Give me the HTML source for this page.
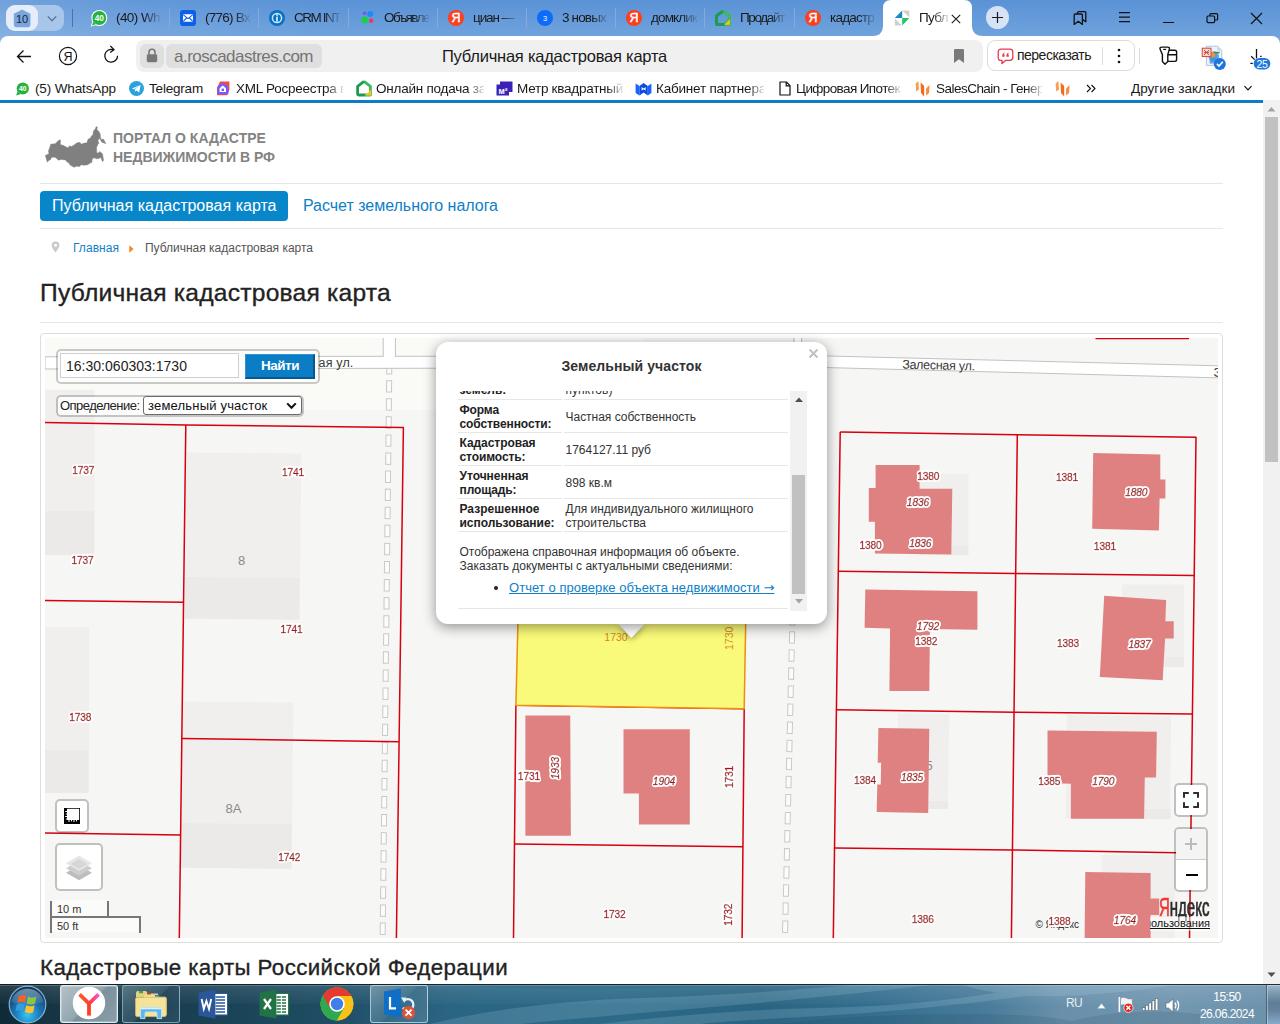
<!DOCTYPE html>
<html lang="ru">
<head>
<meta charset="utf-8">
<title>Публичная кадастровая карта</title>
<style>
*{box-sizing:border-box;margin:0;padding:0}
html,body{width:1280px;height:1024px;overflow:hidden;background:#fff}
body{position:relative;font-family:"Liberation Sans",Arial,sans-serif;color:#222;font-size:13px}
.abs{position:absolute}
.ui{font-family:"DejaVu Sans","Liberation Sans",sans-serif}
/* ---------- browser chrome ---------- */
#tabbar{position:absolute;left:0;top:0;width:1280px;height:48px;background:linear-gradient(90deg,rgba(255,255,255,.14) 0,rgba(255,255,255,.05) 140px,rgba(255,255,255,0) 320px),linear-gradient(180deg,#5a92d6 0,#70a3dd 36px,#7eabe0 48px)}
#toolbar{position:absolute;left:0;top:36px;width:1280px;height:40px;background:#fff;border-radius:8px 8px 0 0}
#bookbar{position:absolute;left:0;top:76px;width:1280px;height:24px;background:#fff}
#blueline{position:absolute;left:0;top:100px;width:1263px;height:3px;background:#0a7dc5}
.tab{position:absolute;top:0;height:36px;font-size:13.5px;color:#1a1a1a;white-space:nowrap;overflow:hidden}
.tab span{position:absolute;top:10px;left:0}
.tsep{position:absolute;top:8px;width:1px;height:20px;background:#86a9d8}
.bm{position:absolute;top:80.7px;height:17px;font-size:13.5px;color:#1a1a1a;white-space:nowrap;overflow:hidden}
.fade{-webkit-mask-image:linear-gradient(90deg,#000 0,#000 calc(100% - 16px),rgba(0,0,0,.12) 100%);mask-image:linear-gradient(90deg,#000 0,#000 calc(100% - 16px),rgba(0,0,0,.12) 100%)}
/* ---------- page ---------- */
#page{position:absolute;left:0;top:103px;width:1263px;height:881px;background:#fff;overflow:hidden}
.hr{position:absolute;left:40px;width:1183px;height:1px;background:#e6e6e6}
a{color:#0f7fc4}
/* ---------- map ---------- */
#mapwrap{position:absolute;left:40px;top:333px;width:1183px;height:610px;border:1px solid #ddd;border-radius:4px;background:#fff}
#map{position:absolute;left:45px;top:338px;width:1173px;height:600px;overflow:hidden;background:#f6f6f4}
.ml{font-family:"Liberation Sans",sans-serif;font-size:10.2px;fill:#a80e15;stroke:#a80e15;stroke-width:.45px;text-anchor:middle;letter-spacing:-.15px}
.mi{font-style:italic}
.ctl{position:absolute;background:#fff;background-clip:padding-box;border:2px solid rgba(0,0,0,.22);border-radius:5px}
/* ---------- popup ---------- */
#popup{position:absolute;left:436px;top:342px;width:391px;height:282px;background:#fff;border-radius:12px;box-shadow:0 3px 13px rgba(0,0,0,.42)}
#popup .row{position:absolute;left:22px;width:333px;font-size:12px;line-height:14px;color:#333}
#popup .lab{position:absolute;left:1px;font-weight:bold;color:#222}
#popup .val{position:absolute;left:107px;color:#333}
#popup .sep{position:absolute;left:22px;width:333px;height:1px;background:#e4e4e4}
/* ---------- taskbar ---------- */
#taskbar{position:absolute;left:0;top:984px;width:1280px;height:40px;background:linear-gradient(90deg,#27566b 0%,#1f4c63 30%,#2a6079 55%,#35708a 75%,#2a5f78 100%)}
</style>
</head>
<body>
<!-- ================= BROWSER CHROME ================= -->
<div id="tabbar">
  <!-- tab group pill -->
  <div class="abs" style="left:6px;top:5px;width:58px;height:26px;border-radius:9px;background:#a8c5ea"></div>
  <div class="abs" style="left:6px;top:5px;width:32px;height:26px;border-radius:9px;background:#e4edf9"></div>
  <svg class="abs" style="left:13px;top:8.5px" width="18" height="19" viewBox="0 0 18 19"><path d="M9 0.6 L17.4 4.8 V15.2 Q17.4 18.3 14.3 18.3 H3.7 Q0.8 18.3 0.8 15.2 V4.8 Z" fill="#79a6dd"/><text x="9" y="13.6" font-family="Liberation Sans, sans-serif" font-size="11" text-anchor="middle" fill="#16243a">10</text></svg>
  <svg class="abs" style="left:46px;top:14.6px" width="12" height="8" viewBox="0 0 12 8"><path d="M1.8 1.4 L6 5.8 L10.2 1.4" fill="none" stroke="#58739a" stroke-width="1.3"/></svg>
  <div class="tsep" style="left:72px;top:9px;height:18px;background:#4f72a4"></div>

  <!-- tab 1 whatsapp -->
  <svg class="abs" style="left:90px;top:10px" width="18" height="17" viewBox="0 0 18 17"><circle cx="9.3" cy="8" r="8" fill="#fff"/><path d="M0.8 16.6 L2.4 11.5 L6.6 15 Z" fill="#fff"/><circle cx="9.3" cy="8" r="6.9" fill="#25b340"/><path d="M2 15.4 L3.2 11.8 L5.8 14.2 Z" fill="#25b340"/><text x="9.3" y="11" font-family="Liberation Sans, sans-serif" font-weight="bold" font-size="8.2" text-anchor="middle" fill="#fff">40</text></svg>
  <div class="tab fade" style="left:116px;width:44px"><span style="letter-spacing:-0.574px">(40) Wh</span></div>
  <div class="tsep" style="left:169px"></div>
  <!-- tab 2 mail -->
  <svg class="abs" style="left:180px;top:10px" width="16" height="16" viewBox="0 0 16 16"><rect x="0" y="0" width="16" height="16" rx="3" fill="#0b5fe8"/><rect x="3" y="4.3" width="10" height="7.4" rx="1" fill="#fff"/><path d="M3.4 4.9 L8 8.6 L12.6 4.9 M3.4 11.2 L6.6 8 M12.6 11.2 L9.4 8" fill="none" stroke="#0b5fe8" stroke-width="1.1"/></svg>
  <div class="tab fade" style="left:205px;width:45px"><span style="letter-spacing:-0.734px">(776) Вх</span></div>
  <div class="tsep" style="left:258px"></div>
  <!-- tab 3 crm -->
  <svg class="abs" style="left:269px;top:10px" width="16" height="16" viewBox="0 0 16 16"><circle cx="8" cy="8" r="8" fill="#0a72c4"/><circle cx="8" cy="8" r="4.6" fill="none" stroke="#cfe6f7" stroke-width="1.5"/><rect x="7.1" y="6.6" width="1.8" height="5" fill="#cfe6f7"/><circle cx="8" cy="4.9" r="1" fill="#cfe6f7"/></svg>
  <div class="tab fade" style="left:294px;width:46px"><span style="letter-spacing:-1.464px">CRM INT</span></div>
  <div class="tsep" style="left:348px"></div>
  <!-- tab 4 объявл -->
  <svg class="abs" style="left:360px;top:10px" width="15" height="15" viewBox="0 0 15 15"><circle cx="4.6" cy="3.2" r="1.8" fill="#8a4bf0"/><circle cx="10.2" cy="4" r="3" fill="#1a8cf8"/><circle cx="4.8" cy="10" r="3.6" fill="#19d04a"/><circle cx="11.2" cy="10.8" r="2.2" fill="#f5374a"/></svg>
  <div class="tab fade" style="left:384px;width:45px"><span style="letter-spacing:-1.540px">Объявле</span></div>
  <div class="tsep" style="left:437px"></div>
  <!-- tab 5 циан -->
  <svg class="abs" style="left:448px;top:10px" width="16" height="16" viewBox="0 0 16 16"><circle cx="8" cy="8" r="8" fill="#fc3f1d"/><text x="8" y="12.4" font-family="Liberation Sans, sans-serif" font-size="12.5" text-anchor="middle" fill="#fff" stroke="#fff" stroke-width=".4">Я</text></svg>
  <div class="tab fade" style="left:473px;width:45px"><span style="letter-spacing:-1.083px">циан —</span></div>
  <div class="tsep" style="left:526px"></div>
  <!-- tab 6 3 новых -->
  <svg class="abs" style="left:537px;top:10px" width="16" height="16" viewBox="0 0 16 16"><circle cx="8" cy="8" r="8" fill="#0d6bf8"/><text x="8" y="10.8" font-family="Liberation Sans, sans-serif" font-size="7.5" text-anchor="middle" fill="#fff">3</text></svg>
  <div class="tab fade" style="left:562px;width:46px"><span style="letter-spacing:-0.837px">3 новых</span></div>
  <div class="tsep" style="left:615px"></div>
  <!-- tab 7 домклик -->
  <svg class="abs" style="left:626px;top:10px" width="16" height="16" viewBox="0 0 16 16"><circle cx="8" cy="8" r="8" fill="#fc3f1d"/><text x="8" y="12.4" font-family="Liberation Sans, sans-serif" font-size="12.5" text-anchor="middle" fill="#fff" stroke="#fff" stroke-width=".4">Я</text></svg>
  <div class="tab fade" style="left:651px;width:46px"><span style="letter-spacing:-0.866px">домклик</span></div>
  <div class="tsep" style="left:704px"></div>
  <!-- tab 8 продай -->
  <svg class="abs" style="left:715px;top:10px" width="16" height="16" viewBox="0 0 16 16"><path d="M8 1 L14.6 6 V14.6 H9.5 L14.6 9.4" fill="none" stroke="#3fb85a" stroke-width="3.2" stroke-linejoin="round"/><path d="M8 1 L1.4 6 V13 Q1.4 14.6 3 14.6 H9.5" fill="none" stroke="#1e9a53" stroke-width="3.2" stroke-linejoin="round"/><path d="M9.3 14.8 L14.8 9.3 V14.8 Z" fill="#f9c614"/></svg>
  <div class="tab fade" style="left:740px;width:46px"><span style="letter-spacing:-1.364px">Продайт</span></div>
  <div class="tsep" style="left:794px"></div>
  <!-- tab 9 кадастр -->
  <svg class="abs" style="left:805px;top:10px" width="16" height="16" viewBox="0 0 16 16"><circle cx="8" cy="8" r="8" fill="#fc3f1d"/><text x="8" y="12.4" font-family="Liberation Sans, sans-serif" font-size="12.5" text-anchor="middle" fill="#fff" stroke="#fff" stroke-width=".4">Я</text></svg>
  <div class="tab fade" style="left:830px;width:45px"><span style="letter-spacing:-0.792px">кадастр</span></div>

  <!-- active tab -->
  <svg class="abs" style="left:873px;top:0" width="110" height="36" viewBox="0 0 110 36"><path d="M0 36 Q9 36 10 27 V8 Q10 0 18 0 H91 Q99 0 99 8 V27 Q100 36 110 36 Z" fill="#fff"/></svg>
  <svg class="abs" style="left:894px;top:10px" width="16" height="16" viewBox="0 0 16 16"><path d="M8.2 0.6 L8.2 8 L0.8 8 Z" fill="#1c86c8"/><path d="M8.2 0.6 H15.4 V7.6 Z" fill="#cfcfcf" transform="translate(0,0)"/><path d="M8.2 8 L15.4 8 L8.2 15.4 Z" fill="#20c768"/><path d="M0.8 8.4 L7.8 15.4 H0.8 Z" fill="#cfcfcf"/><path d="M15.5 0.5 V8 H8 Z" fill="#1aa37a" opacity=".0"/><path d="M8 8 L0.5 15.5 H8 Z" fill="#2d7fd6" opacity="0"/></svg>
  <div class="tab fade" style="left:919px;width:30px"><span style="letter-spacing:-0.652px">Публ</span></div>
  <svg class="abs" style="left:951px;top:14px" width="10" height="10" viewBox="0 0 10 10"><path d="M0.8 0.8 L9.2 9.2 M9.2 0.8 L0.8 9.2" stroke="#222" stroke-width="1.2" fill="none"/></svg>

  <!-- new tab -->
  <div class="abs" style="left:986px;top:6px;width:23px;height:23px;border-radius:12px;background:#d6e3f5"></div>
  <svg class="abs" style="left:991px;top:11px" width="13" height="13" viewBox="0 0 13 13"><path d="M6.5 1 V12 M1 6.5 H12" stroke="#1a1a1a" stroke-width="1.2" fill="none"/></svg>
  <!-- window icons -->
  <svg class="abs" style="left:1072px;top:10px" width="16" height="16" viewBox="0 0 16 16"><path d="M2.2 5 Q2.2 4 3.2 4 H9.4 Q10.4 4 10.4 5 V14.4 L6.3 11.3 L2.2 14.4 Z" fill="none" stroke="#111" stroke-width="1.3" stroke-linejoin="round"/><path d="M5.6 3.8 V2.6 Q5.6 1.6 6.6 1.6 H12.8 Q13.8 1.6 13.8 2.6 V11.8 L10.6 9.6" fill="none" stroke="#111" stroke-width="1.3" stroke-linejoin="round"/></svg>
  <svg class="abs" style="left:1118px;top:11px" width="13" height="12" viewBox="0 0 13 12"><path d="M1 1.7 H12 M1 6.2 H12 M1 10.7 H12" stroke="#111" stroke-width="1.2" fill="none"/></svg>
  <div class="abs" style="left:1163px;top:22px;width:11px;height:1.3px;background:#111"></div>
  <svg class="abs" style="left:1206px;top:12px" width="13" height="13" viewBox="0 0 13 13"><rect x="1" y="4" width="7.6" height="6.6" rx="1" fill="none" stroke="#111" stroke-width="1.2"/><path d="M4 4 V2.6 Q4 1.6 5 1.6 H10.6 Q11.6 1.6 11.6 2.6 V7 Q11.6 8 10.6 8 H8.6" fill="none" stroke="#111" stroke-width="1.2"/></svg>
  <svg class="abs" style="left:1250px;top:12px" width="13" height="13" viewBox="0 0 13 13"><path d="M1 1 L12 12 M12 1 L1 12" stroke="#111" stroke-width="1.2" fill="none"/></svg>
</div>

<div id="toolbar">
  <!-- nav icons (coords relative to toolbar: y-36) -->
  <svg class="abs" style="left:16px;top:13px" width="16" height="15" viewBox="0 0 16 15"><path d="M15 7.5 H2 M7.5 1.5 L1.5 7.5 L7.5 13.5" fill="none" stroke="#111" stroke-width="1.3"/></svg>
  <svg class="abs" style="left:58px;top:10px" width="20" height="20" viewBox="0 0 20 20"><circle cx="10" cy="10" r="8.6" fill="none" stroke="#111" stroke-width="1.2"/><text x="10" y="14.6" font-family="Liberation Sans, sans-serif" font-size="12.5" text-anchor="middle" fill="#111">Я</text></svg>
  <svg class="abs" style="left:103px;top:9px" width="17" height="19" viewBox="0 0 17 19"><path d="M14.6 10.8 A6.4 6.4 0 1 1 10.2 4.7" fill="none" stroke="#111" stroke-width="1.3"/><path d="M7.4 1 L11 4.6 L7.2 7.6" fill="none" stroke="#111" stroke-width="1.3"/></svg>
  <!-- address bar -->
  <div class="abs" style="left:136px;top:4px;width:847px;height:32px;border-radius:8px;background:#f0f0f0"></div>
  <div class="abs" style="left:140px;top:8px;width:24px;height:24px;border-radius:6px;background:#dfdfdf"></div>
  <svg class="abs" style="left:146px;top:12px" width="12" height="15" viewBox="0 0 12 15"><rect x="0.8" y="6.2" width="10.4" height="8" rx="1.4" fill="#777"/><path d="M3 6.5 V4.2 A3 3 0 0 1 9 4.2 V6.5" fill="none" stroke="#777" stroke-width="1.6"/></svg>
  <div class="abs" style="left:166px;top:8px;width:156px;height:24px;border-radius:6px;background:#dfdfdf"></div>
  <div class="abs" style="left:174px;top:11px;font-size:17px;line-height:20px;color:#747474;white-space:nowrap"><span style="letter-spacing:-0.519px">a.roscadastres.com</span></div>
  <div class="abs" style="left:442px;top:10px;font-size:16.5px;line-height:20px;color:#1a1a1a;white-space:nowrap"><span style="letter-spacing:-0.236px">Публичная кадастровая карта</span></div>
  <svg class="abs" style="left:953px;top:12px" width="12" height="16" viewBox="0 0 12 16"><path d="M1 2.2 Q1 1 2.2 1 H9.8 Q11 1 11 2.2 V15 L6 11.2 L1 15 Z" fill="#7a7a7a"/></svg>
  <!-- retell button -->
  <div class="abs" style="left:987px;top:4px;width:148px;height:31px;border-radius:8px;border:1px solid #dcdcdc;background:#fff"></div>
  <svg class="abs" style="left:997px;top:12px" width="17" height="17" viewBox="0 0 17 17"><path d="M4 1.2 H13 Q15.8 1.2 15.8 4 V9.6 Q15.8 12.4 13 12.4 H8.6 L5 15.6 V12.4 H4 Q1.2 12.4 1.2 9.6 V4 Q1.2 1.2 4 1.2 Z" fill="none" stroke="#e8384f" stroke-width="1.3" stroke-linejoin="round"/><path d="M7.6 4.4 Q5.2 5 5.2 7.4 V8.8 H7.6 V6.6 H6.5 Q6.6 5.6 7.6 5.3 Z M11.8 4.4 Q9.4 5 9.4 7.4 V8.8 H11.8 V6.6 H10.7 Q10.8 5.6 11.8 5.3 Z" fill="#e8384f"/></svg>
  <div class="abs" style="left:1017px;top:10px;font-size:14px;line-height:18px;color:#1a1a1a;white-space:nowrap"><span style="letter-spacing:-0.510px">пересказать</span></div>
  <div class="abs" style="left:1102px;top:11px;width:1px;height:18px;background:#ddd"></div>
  <svg class="abs" style="left:1117px;top:12px" width="4" height="16" viewBox="0 0 4 16"><circle cx="2" cy="2" r="1.3" fill="#111"/><circle cx="2" cy="8" r="1.3" fill="#111"/><circle cx="2" cy="14" r="1.3" fill="#111"/></svg>
  <div class="abs" style="left:1139px;top:12px;width:1px;height:16px;background:#ddd"></div>
  <!-- extensions -->
  <svg class="abs" style="left:1158px;top:10px" width="20" height="20" viewBox="0 0 20 20"><path d="M9.6 5.2 Q9.6 4.2 10.6 4.2 H16.8 Q18.6 4.2 18.6 6 V13.6 Q18.6 15.4 16.8 15.4 H10 M9.6 8.8 H18.6" fill="none" stroke="#111" stroke-width="1.4"/><path d="M2 3 Q1.8 1.1 3.8 1.1 H9.6 Q11.6 1.1 11.4 3 L9.8 8.6 V15.6 L7 18.2 L4.4 15.6 V8.6 Z" fill="#fff" stroke="#111" stroke-width="1.4" stroke-linejoin="round"/><path d="M5.2 3.4 H8.2" stroke="#111" stroke-width="1.2"/></svg>
  <!-- doc icon with check -->
  <svg class="abs" style="left:1200px;top:8px" width="28" height="28" viewBox="0 0 28 28"><path d="M6.4 2.2 H17.4 L21.8 6.4 V21.4 H6.4 Z" fill="#eef3fb" stroke="#a9bfdc" stroke-width="0.9"/><path d="M17.4 2.2 L21.8 6.4 H17.4 Z" fill="#c5d4ea"/><circle cx="13.8" cy="12.4" r="5.2" fill="#2f7fd8" opacity=".75"/><circle cx="12.6" cy="10.6" r="2.6" fill="#f0962a"/><path d="M14 8.6 H19.6" stroke="#2c9b57" stroke-width="1.6"/><path d="M9.6 15.6 Q13.6 11.8 18.6 15.6 V19.4 H9.6 Z" fill="#3d8fe0" opacity=".8"/><rect x="2.2" y="4.2" width="8.8" height="8.4" fill="#f7d9d5" stroke="#d0463a" stroke-width="1"/><path d="M4 6 L9.2 11 M9.2 6 L4 11 M4 8.4 H9.2" stroke="#d0463a" stroke-width="1"/><circle cx="19.8" cy="19.9" r="6" fill="#1b76e0"/><path d="M16.9 19.9 L19 22 L22.8 17.8" fill="none" stroke="#fff" stroke-width="1.6"/></svg>
  <!-- downloads -->
  <svg class="abs" style="left:1246px;top:11px" width="28" height="24" viewBox="0 0 28 24"><path d="M10.5 2 V11.4" stroke="#111" stroke-width="1.3" fill="none"/><path d="M5.2 9.2 L8.6 12.6" stroke="#111" stroke-width="1.3" fill="none"/><path d="M4.4 16.3 H6.8 M14.2 9.3 H15.6" stroke="#111" stroke-width="1.2"/><rect x="7.7" y="10.9" width="16.6" height="11.5" rx="5.75" fill="#1b76e0"/><text x="16" y="20.5" font-family="Liberation Sans, sans-serif" font-size="10.5" letter-spacing="-.4" text-anchor="middle" fill="#fff">25</text></svg>
</div>

<div id="bookbar"></div>
<!-- bookmarks -->
<svg class="abs" style="left:15px;top:82px" width="15" height="14" viewBox="0 0 15 14"><path d="M1.2 13.4 L2.4 9.6 L5.4 12.2 Z" fill="#25b340"/><circle cx="7.8" cy="6.5" r="6.1" fill="#25b340"/><text x="7.8" y="9" font-family="Liberation Sans, sans-serif" font-weight="bold" font-size="6.8" text-anchor="middle" fill="#fff">40</text></svg>
<div class="bm" style="left:35px"><span style="letter-spacing:-0.128px">(5) WhatsApp</span></div>
<svg class="abs" style="left:129px;top:81px" width="15" height="15" viewBox="0 0 15 15"><circle cx="7.5" cy="7.5" r="7.5" fill="#2aa3dc"/><path d="M3 7.4 L11.6 3.9 L10.2 11.4 L7.4 9.4 L6 10.8 L5.8 8.6 L10 5.2 L4.9 8.2 Z" fill="#fff"/></svg>
<div class="bm" style="left:149px"><span style="letter-spacing:-0.191px">Telegram</span></div>
<svg class="abs" style="left:216px;top:81px" width="15" height="15" viewBox="0 0 15 15"><path d="M4 0.6 H13.4 V9 L11 14.2 H1 V7 Z" fill="#f04a4a"/><path d="M1.2 6 L6.8 1.6 L12.4 6 V13.2 H1.2 Z" fill="#7a5af5"/><path d="M3.6 7.2 L6.8 4.6 L10 7.2 V11 H3.6 Z" fill="#fff"/><rect x="5.6" y="7.6" width="2.4" height="2.4" fill="#7a5af5"/></svg>
<div class="bm fade" style="left:236px;width:107px"><span style="letter-spacing:-0.255px">XML Росреестра в</span></div>
<svg class="abs" style="left:356px;top:80px" width="16" height="17" viewBox="0 0 16 17"><path d="M8 1.4 L14.4 6.4 V15 H9.6" fill="none" stroke="#3fb85a" stroke-width="2.8" stroke-linejoin="round"/><path d="M8 1.4 L1.6 6.4 V13.4 Q1.6 15 3.2 15 H9.6" fill="none" stroke="#1e9a53" stroke-width="2.8" stroke-linejoin="round"/><path d="M9.2 15.4 L15 9.6 V15.4 Z" fill="#f9c614"/></svg>
<div class="bm fade" style="left:376px;width:108px"><span style="letter-spacing:-0.231px">Онлайн подача за</span></div>
<svg class="abs" style="left:496px;top:81px" width="17" height="15" viewBox="0 0 17 15"><path d="M4 0.5 H16.5 V11 H4 Z" fill="#3a22b8"/><rect x="0.5" y="3.5" width="12.5" height="11" fill="#3a22b8"/><text x="7" y="12.6" font-family="Liberation Sans, sans-serif" font-weight="bold" font-size="8.5" text-anchor="middle" fill="#fff">м²</text></svg>
<div class="bm fade" style="left:517px;width:106px"><span style="letter-spacing:-0.255px">Метр квадратный</span></div>
<svg class="abs" style="left:635px;top:81px" width="17" height="16" viewBox="0 0 17 16"><path d="M0.6 2.6 L4.4 5 V14.6 L0.6 12 Z" fill="#1565ff"/><path d="M4.4 5 L8.6 2 L12.8 5 V14.6 L8.6 11.6 L4.4 14.6 Z" fill="#0b4be0"/><path d="M12.8 5 L16.4 2.6 V12 L12.8 14.6 Z" fill="#1565ff"/><path d="M6.6 6 L8.6 7.6 L10.6 6 V9.6 L8.6 8.2 L6.6 9.6 Z" fill="#fff"/></svg>
<div class="bm fade" style="left:656px;width:108px"><span style="letter-spacing:-0.206px">Кабинет партнера</span></div>
<svg class="abs" style="left:779px;top:81px" width="12" height="15" viewBox="0 0 12 15"><path d="M1 1 H7.4 L11 4.6 V14 H1 Z" fill="#fff" stroke="#111" stroke-width="1.2" stroke-linejoin="round"/><path d="M7.2 1 V4.8 H11" fill="none" stroke="#111" stroke-width="1.2"/></svg>
<div class="bm fade" style="left:796px;width:105px"><span style="letter-spacing:-0.607px">Цифровая Ипотека</span></div>
<svg class="abs" style="left:914px;top:80px" width="18" height="17" viewBox="0 0 18 17"><path d="M1.6 3.4 L4.4 1 L5 9.4 L2.2 11.6 Z" fill="#f7a054"/><path d="M6.6 2.4 L10.2 6 L10.2 16.6 L7 13 Z" fill="#f26b1d"/><path d="M12.2 8.6 L15.6 5 L15 13 L12 15.6 Z" fill="#f58a3c"/></svg>
<div class="bm fade" style="left:936px;width:106px"><span style="letter-spacing:-0.524px">SalesChain - Генер</span></div>
<svg class="abs" style="left:1054px;top:80px" width="18" height="17" viewBox="0 0 18 17"><path d="M1.6 3.4 L4.4 1 L5 9.4 L2.2 11.6 Z" fill="#f7a054"/><path d="M6.6 2.4 L10.2 6 L10.2 16.6 L7 13 Z" fill="#f26b1d"/><path d="M12.2 8.6 L15.6 5 L15 13 L12 15.6 Z" fill="#f58a3c"/></svg>
<svg class="abs" style="left:1086px;top:84px" width="10" height="9" viewBox="0 0 10 9"><path d="M1 1 L4.5 4.5 L1 8 M5.5 1 L9 4.5 L5.5 8" fill="none" stroke="#111" stroke-width="1.1"/></svg>
<div class="bm" style="left:1131px"><span style="letter-spacing:0.036px">Другие закладки</span></div>
<svg class="abs" style="left:1243px;top:85px" width="10" height="7" viewBox="0 0 10 7"><path d="M1.5 1.2 L5 4.8 L8.5 1.2" fill="none" stroke="#111" stroke-width="1.2"/></svg>
<div id="blueline"></div>
<!-- ================= PAGE ================= -->
<div class="abs" style="left:0;top:103px;width:1263px;height:881px;background:#fff"></div>
<!-- page scrollbar -->
<div class="abs" style="left:1263px;top:100px;width:17px;height:884px;background:#f1f1f1"></div>
<div class="abs" style="left:1265px;top:117px;width:13px;height:345px;background:#c1c1c1"></div>
<svg class="abs" style="left:1267px;top:106px" width="9" height="6" viewBox="0 0 9 6"><path d="M0.5 5.5 L4.5 1 L8.5 5.5 Z" fill="#a3a3a3"/></svg>
<svg class="abs" style="left:1267px;top:972px" width="9" height="6" viewBox="0 0 9 6"><path d="M0.5 0.5 L4.5 5 L8.5 0.5 Z" fill="#505050"/></svg>

<!-- logo -->
<svg class="abs" style="left:40px;top:120px" width="72" height="52" viewBox="0 0 1280 924"><path d="M95 630 L130 750 L160 715 L190 700 L205 660 L270 660 L330 715 L370 700 L455 710 L480 745 L510 760 L535 800 L605 840 L650 820 L705 825 L730 795 L780 805 L850 795 L890 765 L920 755 L930 690 L965 670 L1000 690 L1060 680 L1080 660 L1110 740 L1130 715 L1110 600 L1060 560 L1040 585 L1010 585 L1005 490 L1030 430 L1045 415 L1030 370 L1055 320 L1100 395 L1170 420 L1130 340 L1090 345 L1075 310 L1070 250 L1045 200 L1010 170 L1020 130 L1000 115 L985 155 L950 195 L940 260 L910 290 L900 320 L855 340 L830 410 L790 410 L730 430 L710 395 L650 410 L600 450 L560 470 L530 460 L490 495 L420 455 L360 435 L365 360 L340 355 L270 420 L190 430 L180 470 L150 550 L160 600 Z" fill="#808080" stroke="#808080" stroke-width="8" stroke-linejoin="round"/></svg>
<div class="abs" style="left:113px;top:129px;font-size:14px;line-height:19px;font-weight:bold;color:#838383;white-space:nowrap"><span style="letter-spacing:0.032px">ПОРТАЛ О КАДАСТРЕ</span><br><span style="letter-spacing:-0.014px">НЕДВИЖИМОСТИ В РФ</span></div>

<div class="hr" style="top:183px"></div>
<!-- nav -->
<div class="abs" style="left:40px;top:191px;width:248px;height:30px;border-radius:4px;background:#0886ca"></div>
<div class="abs" style="left:52px;top:196px;font-size:16px;line-height:20px;color:#fff;white-space:nowrap"><span style="letter-spacing:0.005px">Публичная кадастровая карта</span></div>
<div class="abs" style="left:303px;top:196px;font-size:16px;line-height:20px;color:#0f80c6;white-space:nowrap"><span style="letter-spacing:-0.022px">Расчет земельного налога</span></div>
<div class="hr" style="top:228px"></div>
<!-- breadcrumbs -->
<svg class="abs" style="left:51px;top:241px" width="9" height="12" viewBox="0 0 9 12"><path d="M4.5 0.4 A3.9 3.9 0 0 1 8.4 4.3 Q8.4 6.6 4.5 11.6 Q0.6 6.6 0.6 4.3 A3.9 3.9 0 0 1 4.5 0.4 Z" fill="#c9c9c9"/><circle cx="4.5" cy="4.2" r="1.5" fill="#fff"/></svg>
<div class="abs" style="left:73px;top:240px;font-size:12px;line-height:16px;color:#0f80c6;white-space:nowrap"><span style="letter-spacing:0.045px">Главная</span></div>
<svg class="abs" style="left:129px;top:245px" width="5" height="8" viewBox="0 0 5 8"><path d="M0.3 0.3 L4.6 4 L0.3 7.7 Z" fill="#f08a1c"/></svg>
<div class="abs" style="left:145px;top:240px;font-size:12px;line-height:16px;color:#555;white-space:nowrap"><span style="letter-spacing:-0.010px">Публичная кадастровая карта</span></div>
<!-- h1 -->
<div class="abs" style="left:40px;top:276.8px;font-size:24.6px;line-height:32px;color:#222;-webkit-text-stroke:.35px #222;white-space:nowrap"><span style="letter-spacing:0.227px">Публичная кадастровая карта</span></div>
<div class="hr" style="top:322px"></div>
<!-- h2 -->
<div class="abs" style="left:40px;top:953.3px;font-size:22.3px;line-height:30px;color:#222;-webkit-text-stroke:.35px #222;white-space:nowrap"><span style="letter-spacing:0.398px">Кадастровые карты Российской Федерации</span></div>
<!-- map frame -->
<div id="mapwrap"></div>
<!-- ================= MAP ================= -->
<div id="map">
<svg class="abs" style="left:0;top:0" width="1174" height="600" viewBox="45 338 1174 600">
  <defs><filter id="halo" x="-2%" y="-2%" width="104%" height="104%"><feGaussianBlur in="SourceAlpha" stdDeviation="1.4" result="b"/><feComponentTransfer in="b" result="t"><feFuncA type="linear" slope="14" intercept="-0.6"/></feComponentTransfer><feFlood flood-color="#fff"/><feComposite in2="t" operator="in" result="h"/><feMerge><feMergeNode in="h"/><feMergeNode in="SourceGraphic"/></feMerge></filter></defs>
  <rect x="45" y="338" width="1174" height="600" fill="#f6f6f4"/>
  <rect x="45" y="338" width="600" height="72" fill="#fafaf6"/>
  <!-- faint building blocks -->
  <g fill="#f0efed">
    <rect x="45" y="389.6" width="49.7" height="165.4"/>
    <rect x="185.5" y="453" width="115" height="166" transform="rotate(0.6 243 536)"/>
    <rect x="45" y="627" width="44" height="166"/>
    <rect x="182" y="702" width="110.5" height="166" transform="rotate(0.6 237 785)"/>
    <rect x="919.6" y="473.7" width="48.8" height="81.5"/>
    <rect x="1122" y="584.4" width="62" height="82.5"/>
    <rect x="897.3" y="713.9" width="51.2" height="94.5" transform="rotate(1 923 761)"/>
    <rect x="1066.4" y="715.6" width="104.2" height="103.2" transform="rotate(0.6 1118 767)"/>
    <rect x="1101.8" y="854.9" width="73" height="84"/>
  </g>
  <g fill="#ebeae8">
    <rect x="45" y="511" width="49" height="44"/>
    <rect x="185" y="577.6" width="114.5" height="41.5" transform="rotate(0.6 243 598)"/>
    <rect x="45" y="750" width="43.5" height="43"/>
    <rect x="181" y="823.7" width="110.5" height="44.5" transform="rotate(0.6 237 846)"/>
    <rect x="951" y="545.5" width="17.4" height="9.7"/>
    <rect x="1165" y="657" width="19" height="9.9"/>
    <rect x="928" y="801" width="20" height="8"/>
    <rect x="1144" y="809" width="26.6" height="10"/>
  </g>
  <!-- dashed paths -->
  <path d="M389.37 362.1 L382.6 940" stroke="#c9c9c9" stroke-width="6" stroke-dasharray="12.4 5.68" fill="none"/>
  <path d="M389.37 362.1 L382.6 940" stroke="#fcfcfb" stroke-width="4" stroke-dasharray="10.4 7.68" stroke-dashoffset="-1" fill="none"/>
  <path d="M792.6 613.2 L784.85 940" stroke="#c9c9c9" stroke-width="6" stroke-dasharray="12.4 5.68" fill="none"/>
  <path d="M792.6 613.2 L784.85 940" stroke="#fcfcfb" stroke-width="4" stroke-dasharray="10.4 7.68" stroke-dashoffset="-1" fill="none"/>
  <!-- roads -->
  <path d="M45 356.8 L395 356.3 L828 356 L1219 365.8 L1219 377.9 L828 367.6 L395 368.3 L45 369 Z" fill="#fff" stroke="#c2c2c2" stroke-width="1"/>
  <path d="M383.7 338 L383.7 357 L394.9 357 L394.9 338 Z" fill="#fff"/>
  <path d="M383.2 338 V356.3 M395.4 338 V356.3" stroke="#c2c2c2" stroke-width="1" fill="none"/>
  <path d="M794 338 V356.5 H801.6 V338 Z" fill="#fff"/><path d="M793.9 338 V356.2 M801.6 338 V356.2" stroke="#c2c2c2" stroke-width="1.2" fill="none"/>
  <text x="938.5" y="369.4" font-family="Liberation Sans, sans-serif" font-size="12.5" fill="#3a3a3a" text-anchor="middle" transform="rotate(1.4 938.5 365)" style="letter-spacing:-0.279px">Залесная ул.</text>
  <text x="311.5" y="367" font-family="Liberation Sans, sans-serif" font-size="12.5" fill="#3a3a3a" style="letter-spacing:0.165px">ная ул.</text>
  <text x="1213.5" y="376.6" font-family="Liberation Sans, sans-serif" font-size="12.5" fill="#3a3a3a" transform="rotate(1.4 1213 372)">З</text>
  <text x="241.5" y="564.6" font-family="Liberation Sans, sans-serif" font-size="13" fill="#8a8a8a" text-anchor="middle">8</text>
  <text x="233.4" y="812.6" font-family="Liberation Sans, sans-serif" font-size="13" fill="#8a8a8a" text-anchor="middle">8А</text>
  <text x="929" y="770" font-family="Liberation Sans, sans-serif" font-size="13" fill="#8a8a8a" text-anchor="middle">5</text>

  <!-- buildings -->
  <g fill="#e08181">
    <path d="M875.6 465.1 L919.6 465.1 L919.6 488.8 L952.3 488.8 L951.3 554.5 L874.9 553.4 L874.9 521.8 L868.8 521.8 L868.8 488.1 L875.6 488.1 Z"/>
    <path d="M1093.2 453.1 L1160.3 454.4 L1160.3 479.5 L1165.4 479.5 L1165.4 498.4 L1159.6 498.4 L1158.9 530.4 L1092.2 528.7 Z"/>
    <path d="M865.3 589.5 L977.4 591.3 L977.4 629.8 L929.9 629.1 L929.3 690.9 L889.4 690.9 L890.1 628.4 L864.6 627.7 Z"/>
    <path d="M1104.2 595.7 L1166.1 599.9 L1165.4 621.2 L1173.7 621.2 L1173.7 638.4 L1165.1 638.4 L1162.7 680.2 L1099.8 677.1 Z"/>
    <path d="M878.4 728 L929.3 728.7 L928.2 812.9 L876.7 811.9 L877.3 784.4 L880.8 784.4 L881.1 762.7 L877.7 762.7 Z"/>
    <path d="M1047.5 730.4 L1156.8 731.8 L1156.1 777.5 L1144.8 777.5 L1144.1 818.8 L1070.9 818.8 L1070.9 783.7 L1047.5 783 Z"/>
    <path d="M1085.3 872 L1150.6 873.1 L1150.6 898.5 L1159.2 898.5 L1159.2 915 L1150.6 915 L1150.6 938 L1084.6 938 Z"/>
    <path d="M525.4 715.5 L570.2 715.5 L570.9 835.8 L525.4 835.8 Z"/>
    <path d="M623.5 729.2 L689.8 729.2 L689.8 824.5 L638.9 824.5 L638.9 793.4 L623.5 793.4 Z"/>
  </g>
  <!-- parcel boundaries -->
  <g fill="none" stroke="#d6000e" stroke-width="1.5" stroke-linejoin="round">
    <path d="M45 422.4 L185.8 425 L403.4 427.4 L396.4 938"/>
    <path d="M185.8 425 L179.3 938"/>
    <path d="M45 600.6 L183.3 602.2"/>
    <path d="M181.9 738.4 L398.8 741.7"/>
    <path d="M45 832.9 L180.6 834.9"/>
    <path d="M515.9 705.3 L513.5 938"/>
    <path d="M744.2 708.7 L742.1 938"/>
    <path d="M515.9 705.3 L744.2 708.7"/>
    <path d="M514.6 844 L743 846.8"/>
    <path d="M840.2 432.1 L1017.3 434.8 L1196 437.3 L1189.5 938"/>
    <path d="M840.2 432.1 L833.3 938"/>
    <path d="M1017.3 434.8 L1011.4 938"/>
    <path d="M838.3 571.3 L1015.6 573.4 L1194.2 575.4"/>
    <path d="M836.4 709.8 L1014.2 712.2 L1192.4 713.9"/>
    <path d="M834.5 848 L1012.4 850 L1190.6 853.1"/>
    <path d="M1095.5 338.4 L1189 338.6"/>
  </g>
  <!-- yellow selected parcel -->
  <path d="M519.5 560 L746.8 560 L744.2 708.7 L515.9 705.3 Z" fill="#fafa7a" stroke="#ee8d10" stroke-width="1.5"/>
  <!-- labels -->
  <text x="1035.5" y="927.8" font-family="Liberation Sans, sans-serif" font-size="10" fill="#222" style="letter-spacing:-0.035px">© Яндекс</text>
  <g class="ml" filter="url(#halo)">
    <text x="83.2" y="473.8">1737</text>
    <text x="82.5" y="563.8">1737</text>
    <text x="293" y="475.8">1741</text>
    <text x="291.5" y="633.3">1741</text>
    <text x="80.2" y="721.2">1738</text>
    <text x="289.2" y="861">1742</text>
    <text x="928.2" y="479.6">1380</text>
    <text x="870.5" y="549">1380</text>
    <text x="1067.1" y="480.9">1381</text>
    <text x="1104.9" y="550">1381</text>
    <text x="926.2" y="645.3">1382</text>
    <text x="1068.1" y="647.3">1383</text>
    <text x="865" y="783.7">1384</text>
    <text x="1049.2" y="785.4">1385</text>
    <text x="922.7" y="922.6">1386</text>
    <text x="1059.5" y="924.7">1388</text>
    <text x="528.9" y="780.2">1731</text>
    <text x="614.6" y="917.5">1732</text>
    <text x="728.8" y="777" transform="rotate(-90 728.8 777)" dy="3.8">1731</text>
    <text x="728.1" y="914.8" transform="rotate(-90 728.1 914.8)" dy="3.8">1732</text>
    <g class="mi">
      <text x="917.9" y="505.7">1836</text>
      <text x="920.3" y="546.9">1836</text>
      <text x="1136.2" y="496.1">1880</text>
      <text x="927.9" y="630.1">1792</text>
      <text x="1139.6" y="648.3">1837</text>
      <text x="912.1" y="781.3">1835</text>
      <text x="1103.2" y="785.1">1790</text>
      <text x="1124.9" y="924.3">1764</text>
      <text x="663.9" y="785.2">1904</text>
      <text x="555.2" y="768.1" transform="rotate(-90 555.2 768.1)" dy="3.8">1933</text>
    </g>
  </g>
  <g font-family="Liberation Sans, sans-serif" font-size="10.5" fill="#d68819" text-anchor="middle">
    <text x="616" y="640.7">1730</text>
    <text x="729.5" y="638.3" transform="rotate(-90 729.5 638.3)" dy="3.8">1730</text>
  </g>
</svg>

<!-- search box (coords relative to #map: x-45, y-338) -->
<div class="abs" style="left:10.5px;top:10.5px;width:264px;height:35px;border:2px solid rgba(0,0,0,.2);border-radius:5px;background:rgba(253,253,253,.96);background-clip:padding-box"></div>
<div class="abs" style="left:15px;top:15px;width:179px;height:25px;border:1px solid #cfcfcf;background:#fff"></div>
<div class="abs" style="left:21px;top:19px;font-size:14px;line-height:18px;color:#222;white-space:nowrap"><span style="letter-spacing:0.018px">16:30:060303:1730</span></div>
<div class="abs" style="left:200px;top:16px;width:70px;height:25px;background:#0a7dc5;border-right:2px solid #07588c;border-bottom:2px solid #07588c;border-top:1px solid #2f93d2;border-left:1px solid #2f93d2"></div>
<div class="abs" style="left:200px;top:19px;width:70px;text-align:center;font-size:13.5px;line-height:18px;font-weight:bold;color:#fff;white-space:nowrap"><span style="letter-spacing:-0.494px">Найти</span></div>
<!-- definition select -->
<div class="abs" style="left:10.5px;top:56.5px;width:248px;height:22px;border:2px solid rgba(0,0,0,.2);border-radius:5px;background:#fcfcfc;background-clip:padding-box"></div>
<div class="abs" style="left:15px;top:60px;font-size:13px;line-height:16px;color:#222;white-space:nowrap"><span style="letter-spacing:-0.526px">Определение:</span></div>
<div class="abs" style="left:98px;top:58px;width:159px;height:19px;border:1px solid #6b6b6b;border-radius:3px;background:#fff"></div>
<div class="abs" style="left:103px;top:60px;font-size:13px;line-height:16px;color:#111;white-space:nowrap"><span style="letter-spacing:0.190px">земельный участок</span></div>
<svg class="abs" style="left:241px;top:64px" width="11" height="8" viewBox="0 0 11 8"><path d="M1.2 1.4 L5.5 5.8 L9.8 1.4" fill="none" stroke="#111" stroke-width="2"/></svg>

<!-- ruler button -->
<div class="ctl" style="left:10px;top:461px;width:34px;height:34px"></div>
<svg class="abs" style="left:19px;top:470px" width="16" height="16" viewBox="0 0 16 16"><path d="M0 0 H16 V16 H0 Z M3 0.8 V12 H15.2 V0.8 Z" fill="#000" fill-rule="evenodd"/><path d="M5 12 V14 M7.5 12 V13.4 M10 12 V14 M12.5 12 V13.4 M1.2 3.5 H3 M1.8 6 H3 M1.2 8.5 H3 M1.8 11 H3" stroke="#fff" stroke-width="1"/></svg>
<!-- layers button -->
<div class="ctl" style="left:10px;top:505px;width:48px;height:48px"></div>
<svg class="abs" style="left:20px;top:516px" width="28" height="27" viewBox="0 0 28 27"><path d="M1 18.7 L14 26.2 L27 18.7 L14 11.2 Z" fill="#bdbdbd"/><path d="M1 14.3 L14 21.8 L27 14.3 L14 6.8 Z" fill="#cdcdcd"/><path d="M1 9.2 L14 16.9 L27 9.2 L14 1.4 Z" fill="#e6e6e6"/><path d="M5.6 10 L14 15 L22.4 10 L14 5 Z" fill="#d6d6d6"/></svg>
<!-- scale -->
<div class="abs" style="left:7px;top:562px;width:56px;height:16px;background:rgba(255,255,255,.55)"></div>
<div class="abs" style="left:7px;top:579px;width:88px;height:15px;background:rgba(255,255,255,.55)"></div>
<div class="abs" style="left:5px;top:563.4px;width:59px;height:16.3px;border:2px solid #777;border-top:none"></div>
<div class="abs" style="left:5px;top:577.7px;width:91px;height:17.5px;border:2px solid #777;border-bottom:none"></div>
<div class="abs" style="left:12px;top:565.1px;font-size:11px;line-height:13px;color:#333">10 m</div>
<div class="abs" style="left:12px;top:581.9px;font-size:11px;line-height:13px;color:#333">50 ft</div>

<!-- fullscreen -->
<div class="ctl" style="left:1129px;top:445px;width:34px;height:34px"></div>
<svg class="abs" style="left:1138px;top:454px" width="16" height="16" viewBox="0 0 16 16"><path d="M1 5.8 V1 H5.8 M10.2 1 H15 V5.8 M15 10.2 V15 H10.2 M5.8 15 H1 V10.2" fill="none" stroke="#2e2e2e" stroke-width="2"/></svg>
<!-- zoom -->
<div class="ctl" style="left:1129px;top:489px;width:34px;height:64.5px"></div>
<div class="abs" style="left:1131px;top:491px;width:30px;height:31px;background:#f4f4f4;border-bottom:1px solid #ccc;border-radius:3px 3px 0 0"></div>
<svg class="abs" style="left:1139px;top:499px" width="14" height="14" viewBox="0 0 14 14"><path d="M7 1 V13 M1 7 H13" stroke="#bbb" stroke-width="2" fill="none"/></svg>
<div class="abs" style="left:1141px;top:535.6px;width:12px;height:2.6px;background:#000"></div>
<!-- yandex -->
<div class="abs" style="left:1114px;top:555px;font-size:25px;line-height:28px;white-space:nowrap;color:#2b2b2b;-webkit-text-stroke:.7px;transform:scaleX(.6);transform-origin:0 0"><span style="color:#ee3a32">Я</span>ндекс</div>
<div class="abs" style="left:1105px;top:579px;width:60px;height:14px;overflow:hidden;background:rgba(255,255,255,.5);font-size:11px;line-height:13px;color:#111"><span style="position:absolute;right:0;top:0;white-space:nowrap;text-decoration:underline">Условия использования</span></div>
</div>
<!-- ================= POPUP ================= -->
<svg class="abs" style="left:606px;top:620px;filter:drop-shadow(0 2px 3px rgba(0,0,0,.35))" width="50" height="24" viewBox="0 0 50 24"><path d="M12.4 4 L38.7 4 L25.4 18 Z" fill="#fff"/></svg>
<div id="popup">
  <svg class="abs" style="left:372px;top:6px" width="11" height="11" viewBox="0 0 11 11"><path d="M1.5 1.5 L9.5 9.5 M9.5 1.5 L1.5 9.5" stroke="#c2c2c2" stroke-width="2.1" fill="none"/></svg>
  <div class="abs" style="left:0;top:15px;width:391px;text-align:center;font-size:14px;line-height:18px;font-weight:bold;color:#333;white-space:nowrap"><span style="letter-spacing:0.080px">Земельный участок</span></div>
  <!-- scroll viewport -->
  <div class="abs" style="left:22px;top:48.5px;width:349px;height:220px;overflow:hidden;font-size:12px;line-height:14px;color:#333">
    <!-- coords inside viewport: x-458, y-390.5 -->
    <div class="abs" style="left:1.5px;top:-7.5px;font-weight:bold;color:#222">земель:</div>
    <div class="abs" style="left:107.5px;top:-7.5px">пунктов)</div>
    <div class="abs" style="left:0;top:8.5px;width:104px;height:1px;background:#e6e6e6"></div><div class="abs" style="left:106px;top:8.5px;width:224px;height:1px;background:#e6e6e6"></div>
    <div class="abs" style="left:1.5px;top:12.4px;font-weight:bold;color:#222;white-space:nowrap"><span style="letter-spacing:-0.128px">Форма</span><br><span style="letter-spacing:-0.093px">собственности:</span></div>
    <div class="abs" style="left:107.5px;top:19.3px;white-space:nowrap"><span style="letter-spacing:-0.021px">Частная собственность</span></div>
    <div class="abs" style="left:0;top:41.7px;width:104px;height:1px;background:#e6e6e6"></div><div class="abs" style="left:106px;top:41.7px;width:224px;height:1px;background:#e6e6e6"></div>
    <div class="abs" style="left:1.5px;top:45.6px;font-weight:bold;color:#222;white-space:nowrap"><span style="letter-spacing:-0.050px">Кадастровая</span><br><span style="letter-spacing:-0.092px">стоимость:</span></div>
    <div class="abs" style="left:107.5px;top:52.4px;white-space:nowrap"><span style="letter-spacing:0.008px">1764127.11 руб</span></div>
    <div class="abs" style="left:0;top:74.7px;width:104px;height:1px;background:#e6e6e6"></div><div class="abs" style="left:106px;top:74.7px;width:224px;height:1px;background:#e6e6e6"></div>
    <div class="abs" style="left:1.5px;top:78.6px;font-weight:bold;color:#222;white-space:nowrap"><span style="letter-spacing:-0.028px">Уточненная</span><br><span style="letter-spacing:-0.123px">площадь:</span></div>
    <div class="abs" style="left:107.5px;top:85.4px;white-space:nowrap"><span style="letter-spacing:-0.010px">898 кв.м</span></div>
    <div class="abs" style="left:0;top:107.7px;width:104px;height:1px;background:#e6e6e6"></div><div class="abs" style="left:106px;top:107.7px;width:224px;height:1px;background:#e6e6e6"></div>
    <div class="abs" style="left:1.5px;top:111.6px;font-weight:bold;color:#222;white-space:nowrap"><span style="letter-spacing:0.017px">Разрешенное</span><br><span style="letter-spacing:-0.037px">использование:</span></div>
    <div class="abs" style="left:107.5px;top:111.5px;white-space:nowrap"><span style="letter-spacing:0.011px">Для индивидуального жилищного</span><br><span style="letter-spacing:-0.028px">строительства</span></div>
    <div class="abs" style="left:0;top:140.5px;width:104px;height:1px;background:#e6e6e6"></div><div class="abs" style="left:106px;top:140.5px;width:224px;height:1px;background:#e6e6e6"></div>
    <div class="abs" style="left:1.5px;top:154.3px;white-space:nowrap;color:#333"><span style="letter-spacing:-0.015px">Отображена справочная информация об объекте.</span><br><span style="letter-spacing:-0.016px">Заказать документы с актуальными сведениями:</span></div>
    <div class="abs" style="left:36px;top:195.5px;width:4px;height:4px;border-radius:2px;background:#222"></div>
    <div class="abs" style="left:51px;top:189.2px;white-space:nowrap;font-size:13px;line-height:15px;color:#0f80c6;text-decoration:underline"><span style="letter-spacing:0.044px">Отчет о проверке объекта недвижимости <span style="font-family:'DejaVu Sans',sans-serif;font-size:13px">→</span></span></div>
    <div class="abs" style="left:0;top:217.6px;width:330px;height:1px;background:#e6e6e6"></div>
    <!-- scrollbar -->
    <div class="abs" style="left:332px;top:0;width:17px;height:220px;background:#f1f1f1"></div>
    <div class="abs" style="left:334px;top:84.5px;width:13px;height:118.5px;background:#c1c1c1"></div>
    <svg class="abs" style="left:336.5px;top:6.5px" width="8" height="5" viewBox="0 0 8 5"><path d="M0 5 L4 0.5 L8 5 Z" fill="#505050"/></svg>
    <svg class="abs" style="left:336.5px;top:208.5px" width="8" height="5" viewBox="0 0 8 5"><path d="M0 0 L4 4.5 L8 0 Z" fill="#a3a3a3"/></svg>
  </div>
</div>
<!-- ================= TASKBAR ================= -->
<div id="taskbar">
  <div class="abs" style="left:0;top:0;width:1280px;height:40px;background:linear-gradient(90deg,#102a36 0,#173645 60px,#1a4053 200px,#1f4d64 330px,#2a6583 450px,#2c6a88 620px,#2a6482 760px,#356f8f 880px,#4a7c9b 990px,#6890ab 1060px,#7297b1 1180px,#6b91ab 1280px)"></div>
  <svg class="abs" style="left:0;top:0" width="1280" height="40" viewBox="0 0 1280 40" preserveAspectRatio="none">
    <g opacity=".16" fill="#bfe3f2"><path d="M430 40 Q520 18 640 14 T860 0 H940 Q820 14 700 24 T520 40 Z"/><path d="M600 40 Q720 26 820 24 T1000 8 L1040 10 Q930 26 820 32 T700 40 Z"/><path d="M960 0 Q1000 14 1060 12 T1180 0 Z"/></g>
    <g opacity=".10" fill="#0b2433"><path d="M440 0 Q560 8 660 4 T800 0 Z"/><path d="M780 40 Q860 30 960 30 T1080 40 Z"/><path d="M1060 40 Q1120 22 1200 30 L1200 40 Z"/></g>
  </svg>
  <div class="abs" style="left:0;top:0;width:1280px;height:1px;background:#0d1b22;opacity:.85"></div>
  <div class="abs" style="left:0;top:1px;width:1280px;height:1px;background:rgba(255,255,255,.28)"></div>
  <div class="abs" style="left:0;top:2px;width:1280px;height:18px;background:linear-gradient(180deg,rgba(255,255,255,.10),rgba(255,255,255,.02))"></div>

  <!-- start orb -->
  <svg class="abs" style="left:8px;top:1px" width="39" height="39" viewBox="0 0 39 39">
    <defs><radialGradient id="orb" cx="50%" cy="78%" r="75%"><stop offset="0" stop-color="#37c6f7"/><stop offset=".45" stop-color="#1c78b8"/><stop offset="1" stop-color="#12365c"/></radialGradient><linearGradient id="orbh" x1="0" y1="0" x2="0" y2="1"><stop offset="0" stop-color="#fff" stop-opacity=".75"/><stop offset="1" stop-color="#fff" stop-opacity=".1"/></linearGradient></defs>
    <circle cx="19.5" cy="19.5" r="18.3" fill="url(#orb)" stroke="#7fb4d6" stroke-width="1.2"/>
    <path d="M3.4 17 A16.4 16.4 0 0 1 35.6 17 Q19.5 23 3.4 17 Z" fill="url(#orbh)" opacity=".55"/>
    <path d="M10.6 11.4 Q14.6 8.6 18.4 11 L17 17.8 Q13.4 15.6 9.2 18 Z" fill="#f0642a"/>
    <path d="M20 11.6 Q23.6 13.8 28.4 11.6 L27 18.6 Q22.8 20.6 18.6 18.4 Z" fill="#8dc63f"/>
    <path d="M8.8 19.6 Q12.8 17.2 16.6 19.4 L15.2 26.4 Q11.4 24 7.4 26.4 Z" fill="#2f9fe0"/>
    <path d="M18.2 20.2 Q22.4 22.2 26.6 20.2 L25.2 27.2 Q21 29.2 16.8 27 Z" fill="#fbc12d"/>
  </svg>

  <!-- yandex (active) -->
  <div class="abs" style="left:60px;top:1px;width:58px;height:38px;border-radius:3px;border:1px solid rgba(255,255,255,.75);background:linear-gradient(135deg,#b4c2c8 0%,#93a6af 48%,#7b919c 52%,#8a9ea8 100%);box-shadow:inset 0 0 0 1px rgba(255,255,255,.25)"></div>
  <svg class="abs" style="left:72px;top:2px" width="34" height="34" viewBox="0 0 34 34"><defs><linearGradient id="yg" x1="0" y1="0" x2="1" y2="0"><stop offset="0" stop-color="#ff5a1f"/><stop offset=".55" stop-color="#ff3d3d"/><stop offset="1" stop-color="#ff4fd8"/></linearGradient></defs><circle cx="17" cy="17" r="16.2" fill="#fff"/><path d="M7.6 8.4 L17 17.6 L26.6 8.4" fill="none" stroke="url(#yg)" stroke-width="3.8" stroke-linejoin="round"/><path d="M17 17 V29.6" stroke="#ff3d2e" stroke-width="3.8" fill="none"/></svg>

  <!-- explorer -->
  <div class="abs" style="left:122px;top:1px;width:58px;height:38px;border-radius:3px;border:1px solid rgba(200,225,235,.55);background:linear-gradient(135deg,rgba(120,150,165,.55) 0%,rgba(70,105,125,.5) 50%,rgba(40,75,95,.45) 52%,rgba(60,95,115,.5) 100%)"></div>
  <svg class="abs" style="left:134px;top:4px" width="34" height="32" viewBox="0 0 34 32">
    <path d="M2 5 Q2 3 4 3 H12 L14 5.4 H24 V9 H2 Z" fill="#e9d17c"/>
    <rect x="5" y="3" width="4" height="2.2" fill="#28b043"/><rect x="13" y="5" width="4" height="2.2" fill="#d63a2a"/><rect x="21" y="7" width="4" height="2.2" fill="#2f86e0"/>
    <path d="M10 8 Q10 6.4 11.6 6.4 H19 L21 8.8 H31 Q32.6 8.8 32.6 10.4 V27 H10 Z" fill="#f1de95"/>
    <path d="M1.6 11 Q1.6 9.4 3.2 9.4 H30.6 Q32.2 9.4 32.2 11 V27 Q32.2 28.6 30.6 28.6 H3.2 Q1.6 28.6 1.6 27 Z" fill="#f6e39a" stroke="#d9bf63" stroke-width=".8"/>
    <path d="M6.4 30.6 V22 Q6.4 19.4 9 19.4 H25 Q27.6 19.4 27.6 22 V30.6 H23 V25.4 Q23 24 21.6 24 H12.4 Q11 24 11 25.4 V30.6 Z" fill="#5fb6ea" stroke="#bfe6fb" stroke-width=".9"/>
    <path d="M7 20.6 H27" stroke="#d8f1ff" stroke-width="1.4"/>
  </svg>

  <!-- word -->
  <svg class="abs" style="left:198px;top:5px" width="31" height="30" viewBox="0 0 31 30"><rect x="14" y="4.4" width="15.6" height="21.6" fill="#fff" stroke="#2b579a" stroke-width="1.1"/><path d="M17.6 8 H27 M17.6 11 H27 M17.6 14 H27 M17.6 17 H27 M17.6 20 H27 M17.6 23 H27" stroke="#2b579a" stroke-width="1.3"/><path d="M0.6 3.4 L17.4 0.4 V29.6 L0.6 26.6 Z" fill="#2b579a"/><path d="M3.6 10 L5.8 20 L8.4 12 L11 20 L13.2 10" fill="none" stroke="#fff" stroke-width="1.9" stroke-linejoin="miter"/></svg>
  <!-- excel -->
  <svg class="abs" style="left:259px;top:5px" width="31" height="30" viewBox="0 0 31 30"><rect x="14" y="4.4" width="15.6" height="21.6" fill="#fff" stroke="#217346" stroke-width="1.1"/><path d="M17.6 8 H27 M17.6 11 H27 M17.6 14 H27 M17.6 17 H27 M17.6 20 H27 M17.6 23 H27" stroke="#217346" stroke-width="1.5"/><path d="M22.4 6 V25" stroke="#fff" stroke-width="1"/><path d="M0.6 3.4 L17.4 0.4 V29.6 L0.6 26.6 Z" fill="#217346"/><path d="M5 10 L12 20 M12 10 L5 20" fill="none" stroke="#fff" stroke-width="2.2"/></svg>
  <!-- chrome -->
  <svg class="abs" style="left:320px;top:3px" width="34" height="34" viewBox="0 0 34 34"><circle cx="17" cy="17" r="16.4" fill="#fbc116"/><path d="M17 17 L2.8 8.8 A16.4 16.4 0 0 1 31.2 8.8 Z" fill="#e33b2e"/><path d="M17 17 L2.8 8.8 A16.4 16.4 0 0 0 17 33.4 L24 21 Z" fill="#2da94f"/><path d="M17 9 H31.3 A16.4 16.4 0 0 0 2.8 8.8 L9.8 21 Z" fill="#e33b2e"/><path d="M9.9 21 L2.8 8.8 A16.4 16.4 0 0 0 17 33.4 L24 21.2 Z" fill="#2da94f"/><path d="M17 9 H31.3 A16.4 16.4 0 0 1 17 33.4 L24.1 21 Z" fill="#fbc116"/><circle cx="17" cy="17" r="7.8" fill="#fff"/><circle cx="17" cy="17" r="6.2" fill="#3f7fe9"/></svg>
  <!-- lync -->
  <div class="abs" style="left:370px;top:1px;width:58px;height:38px;border-radius:3px;border:1px solid rgba(215,232,240,.7);background:linear-gradient(135deg,rgba(150,180,195,.6) 0%,rgba(90,135,160,.55) 50%,rgba(70,120,148,.55) 52%,rgba(95,140,165,.55) 100%)"></div>
  <svg class="abs" style="left:383px;top:4px" width="34" height="34" viewBox="0 0 34 34"><path d="M1 3.6 L18 0.6 V29.4 L1 26.4 Z" fill="#0f6fc6"/><path d="M7 9 V20.4 H13" fill="none" stroke="#fff" stroke-width="2.2"/><path d="M20.6 13 A5.6 5.6 0 1 1 20 19.6" fill="none" stroke="#dff0ff" stroke-width="2.4"/><path d="M18 9.6 L23.4 9.6 L21.4 15 Z" fill="#dff0ff"/><circle cx="25.6" cy="24.6" r="6.6" fill="#d9543a"/><path d="M22.6 21.6 L28.6 27.6 M28.6 21.6 L22.6 27.6" stroke="#fff" stroke-width="1.8"/></svg>

  <!-- tray -->
  <div class="abs" style="left:1066px;top:11.5px;font-size:12px;line-height:14px;color:#e8eef2;white-space:nowrap"><span style="letter-spacing:-0.672px">RU</span></div>
  <svg class="abs" style="left:1097px;top:18.5px" width="9" height="6" viewBox="0 0 9 6"><path d="M0.4 5.6 L4.5 0.6 L8.6 5.6 Z" fill="#fff" stroke="#8aa" stroke-width=".5"/></svg>
  <svg class="abs" style="left:1117px;top:12px" width="18" height="18" viewBox="0 0 18 18"><path d="M2.4 1 V16" stroke="#fff" stroke-width="1.6"/><path d="M3.4 2 Q6.6 0.4 9.4 2 T15.4 2.6 V9.6 Q12.4 10.8 9.4 9.4 T3.4 9.4 Z" fill="#eef4f8" stroke="#6d7f8a" stroke-width=".6"/><circle cx="11.4" cy="11.8" r="4.6" fill="#e0231c" stroke="#fff" stroke-width=".7"/><path d="M9.4 9.8 L13.4 13.8 M13.4 9.8 L9.4 13.8" stroke="#fff" stroke-width="1.5"/></svg>
  <svg class="abs" style="left:1142px;top:14px" width="17" height="13" viewBox="0 0 17 13"><g fill="#fff" stroke="#4b5d68" stroke-width=".5"><rect x="0.5" y="9.6" width="2.4" height="2.9"/><rect x="3.7" y="7.4" width="2.4" height="5.1"/><rect x="6.9" y="5" width="2.4" height="7.5"/><rect x="10.1" y="2.6" width="2.4" height="9.9"/><rect x="13.3" y="0.4" width="2.6" height="12.1"/></g></svg>
  <svg class="abs" style="left:1165px;top:12.5px" width="17" height="17" viewBox="0 0 17 17"><path d="M1 6 H3.6 L8 2 V15 L3.6 11 H1 Z" fill="#fff" stroke="#5a6c77" stroke-width=".6"/><path d="M10 5.6 Q11.8 8.5 10 11.4 M12.2 3.6 Q15.2 8.5 12.2 13.4" fill="none" stroke="#fff" stroke-width="1.3"/></svg>
  <div class="abs" style="left:1187px;top:6px;width:80px;text-align:center;font-size:12px;line-height:14px;color:#fff;white-space:nowrap"><span style="letter-spacing:-0.506px">15:50</span></div>
  <div class="abs" style="left:1187px;top:23px;width:80px;text-align:center;font-size:12px;line-height:14px;color:#fff;white-space:nowrap"><span style="letter-spacing:-0.606px">26.06.2024</span></div>
  <div class="abs" style="left:1266px;top:1px;width:14px;height:39px;border-left:1px solid #4a657b;background:linear-gradient(180deg,#9fb8cb 0,#7c98ae 22%,#607e97 45%,#64839d 65%,#86aac8 100%);box-shadow:inset 1px 1px 0 rgba(255,255,255,.35)"></div>
</div>
</body>
</html>
